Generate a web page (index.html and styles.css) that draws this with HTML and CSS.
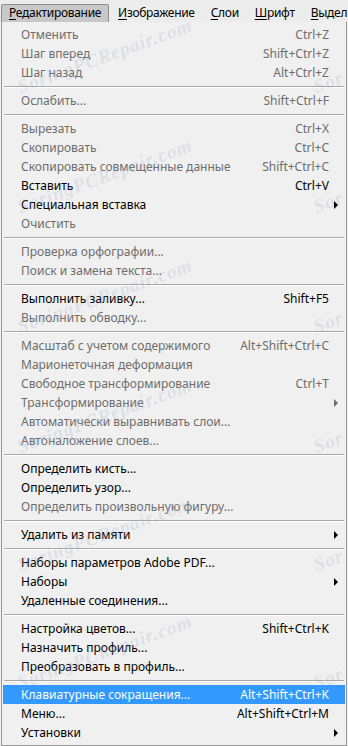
FILE: index.html
```html
<!DOCTYPE html>
<html lang="ru">
<head>
<meta charset="utf-8">
<title>Редактирование</title>
<link rel="stylesheet" href="styles.css">
</head>
<body>
<div class="menubar">
  <span class="mb-item active"><u>Р</u>едактирование</span>
  <span class="mb-item"><u>И</u>зображение</span>
  <span class="mb-item"><u>С</u>лои</span>
  <span class="mb-item"><u>Ш</u>рифт</span>
  <span class="mb-item last"><u>В</u>ыдел</span>
</div>
<div class="menu">
  <div class="item dis"><span class="lbl">Отменить</span><span class="sc">Ctrl+Z</span><span class="ar"></span></div>
  <div class="item dis"><span class="lbl">Шаг вперед</span><span class="sc">Shift+Ctrl+Z</span><span class="ar"></span></div>
  <div class="item dis"><span class="lbl">Шаг назад</span><span class="sc">Alt+Ctrl+Z</span><span class="ar"></span></div>
  <div class="sep"></div>
  <div class="item dis"><span class="lbl">Ослабить...</span><span class="sc">Shift+Ctrl+F</span><span class="ar"></span></div>
  <div class="sep"></div>
  <div class="item dis"><span class="lbl">Вырезать</span><span class="sc">Ctrl+X</span><span class="ar"></span></div>
  <div class="item dis"><span class="lbl">Скопировать</span><span class="sc">Ctrl+C</span><span class="ar"></span></div>
  <div class="item dis"><span class="lbl">Скопировать совмещенные данные</span><span class="sc">Shift+Ctrl+C</span><span class="ar"></span></div>
  <div class="item"><span class="lbl">Вставить</span><span class="sc">Ctrl+V</span><span class="ar"></span></div>
  <div class="item sub"><span class="lbl">Специальная вставка</span><span class="sc"></span><span class="ar"></span></div>
  <div class="item dis"><span class="lbl">Очистить</span><span class="sc"></span><span class="ar"></span></div>
  <div class="sep"></div>
  <div class="item dis"><span class="lbl">Проверка орфографии...</span><span class="sc"></span><span class="ar"></span></div>
  <div class="item dis"><span class="lbl">Поиск и замена текста...</span><span class="sc"></span><span class="ar"></span></div>
  <div class="sep"></div>
  <div class="item"><span class="lbl">Выполнить заливку...</span><span class="sc">Shift+F5</span><span class="ar"></span></div>
  <div class="item dis"><span class="lbl">Выполнить обводку...</span><span class="sc"></span><span class="ar"></span></div>
  <div class="sep"></div>
  <div class="item dis"><span class="lbl">Масштаб с учетом содержимого</span><span class="sc">Alt+Shift+Ctrl+C</span><span class="ar"></span></div>
  <div class="item dis"><span class="lbl">Марионеточная деформация</span><span class="sc"></span><span class="ar"></span></div>
  <div class="item dis"><span class="lbl">Свободное трансформирование</span><span class="sc">Ctrl+T</span><span class="ar"></span></div>
  <div class="item dis sub"><span class="lbl">Трансформирование</span><span class="sc"></span><span class="ar"></span></div>
  <div class="item dis"><span class="lbl">Автоматически выравнивать слои...</span><span class="sc"></span><span class="ar"></span></div>
  <div class="item dis"><span class="lbl">Автоналожение слоев...</span><span class="sc"></span><span class="ar"></span></div>
  <div class="sep"></div>
  <div class="item"><span class="lbl">Определить кисть...</span><span class="sc"></span><span class="ar"></span></div>
  <div class="item"><span class="lbl">Определить узор...</span><span class="sc"></span><span class="ar"></span></div>
  <div class="item dis"><span class="lbl">Определить произвольную фигуру...</span><span class="sc"></span><span class="ar"></span></div>
  <div class="sep"></div>
  <div class="item sub"><span class="lbl">Удалить из памяти</span><span class="sc"></span><span class="ar"></span></div>
  <div class="sep"></div>
  <div class="item"><span class="lbl">Наборы параметров Adobe PDF...</span><span class="sc"></span><span class="ar"></span></div>
  <div class="item sub"><span class="lbl">Наборы</span><span class="sc"></span><span class="ar"></span></div>
  <div class="item"><span class="lbl">Удаленные соединения...</span><span class="sc"></span><span class="ar"></span></div>
  <div class="sep"></div>
  <div class="item"><span class="lbl">Настройка цветов...</span><span class="sc">Shift+Ctrl+K</span><span class="ar"></span></div>
  <div class="item"><span class="lbl">Назначить профиль...</span><span class="sc"></span><span class="ar"></span></div>
  <div class="item"><span class="lbl">Преобразовать в профиль...</span><span class="sc"></span><span class="ar"></span></div>
  <div class="sep"></div>
  <div class="item hl"><span class="lbl">Клавиатурные сокращения...</span><span class="sc">Alt+Shift+Ctrl+K</span><span class="ar"></span></div>
  <div class="item"><span class="lbl">Меню...</span><span class="sc">Alt+Shift+Ctrl+M</span><span class="ar"></span></div>
  <div class="item sub"><span class="lbl">Установки</span><span class="sc"></span><span class="ar"></span></div>
</div>
<div class="wm" aria-hidden="true">
  <span class="wm-t" style="left:22px;top:76px">SoringPCRepair.com</span>
  <span class="wm-t" style="left:318px;top:76px">Sor</span>
  <span class="wm-t" style="left:22px;top:196px">SoringPCRepair.com</span>
  <span class="wm-t" style="left:318px;top:196px">Sor</span>
  <span class="wm-t" style="left:22px;top:316px">SoringPCRepair.com</span>
  <span class="wm-t" style="left:318px;top:316px">Sor</span>
  <span class="wm-t" style="left:22px;top:436px">SoringPCRepair.com</span>
  <span class="wm-t" style="left:318px;top:436px">Sor</span>
  <span class="wm-t" style="left:22px;top:554px">SoringPCRepair.com</span>
  <span class="wm-t" style="left:318px;top:554px">Sor</span>
  <span class="wm-t" style="left:22px;top:672px">SoringPCRepair.com</span>
  <span class="wm-t" style="left:318px;top:672px">Sor</span>
</div>
</body>
</html>
```
FILE: styles.css
```css
* { box-sizing: border-box; }
html, body {
  margin: 0;
  padding: 0;
  background: #f0f0f0;
  overflow: hidden;
}
body {
  font-family: "Noto Sans", "Open Sans", "Liberation Sans", sans-serif;
  font-size: 12px;
  color: #000;
  width: 348px;
  height: 746px;
  position: relative;
}
.menubar {
  height: 22px;
  display: flex;
  align-items: flex-end;
  padding-left: 1px;
  background: #ececec;
  white-space: nowrap;
  overflow: hidden;
}
.mb-item {
  height: 18px;
  line-height: 16px;
  padding: 0 7px;
  letter-spacing: -0.3px;
  border: 1px solid transparent;
  border-bottom: none;
  flex-shrink: 0;
}
.mb-item.last { padding-right: 0; }
.mb-item u { text-decoration: underline; text-underline-offset: 2px; }
.mb-item.active {
  background: #c8c8c8;
  border-color: #8d8d8d;
  border-radius: 2px 2px 0 0;
  margin-right: 1px;
}
.menu {
  margin-left: 1px;
  width: 346px;
  height: 724px;
  background: #f0f0f0;
  border: 1px solid #979797;
  border-top: none;
  padding: 3px 0 1px;
}
.item {
  display: flex;
  align-items: center;
  height: 19px;
  margin: 0 1px;
  padding-left: 18px;
  white-space: nowrap;
}
.item .lbl { flex: 1; }
.item .sc { text-align: right; }
.item .ar { width: 16px; height: 19px; position: relative; }
.item.sub .ar::after {
  content: "";
  position: absolute;
  left: 5px;
  top: 6px;
  border-left: 4px solid #000;
  border-top: 4px solid transparent;
  border-bottom: 4px solid transparent;
}
.item.dis.sub .ar::after { border-left-color: #6d6d6d; }
.item.dis { color: #6d6d6d; }
.item.hl { background: #3399ff; color: #fff; }
.sep {
  height: 9px;
  margin: 0 2px;
  display: flex;
  flex-direction: column;
  justify-content: center;
}
.sep::before {
  content: "";
  display: block;
  height: 1px;
  background: #a8a8a8;
}
.sep::after {
  content: "";
  display: block;
  height: 1px;
  background: #ffffff;
}
.wm {
  position: absolute;
  inset: 0;
  pointer-events: none;
  overflow: hidden;
}
.wm-t {
  position: absolute;
  font-family: "Liberation Serif", serif;
  font-style: italic;
  font-weight: bold;
  font-size: 19px;
  letter-spacing: 1px;
  color: rgba(150, 165, 195, 0.22);
  transform: rotate(-20deg);
  transform-origin: 0 100%;
  white-space: nowrap;
}
```
